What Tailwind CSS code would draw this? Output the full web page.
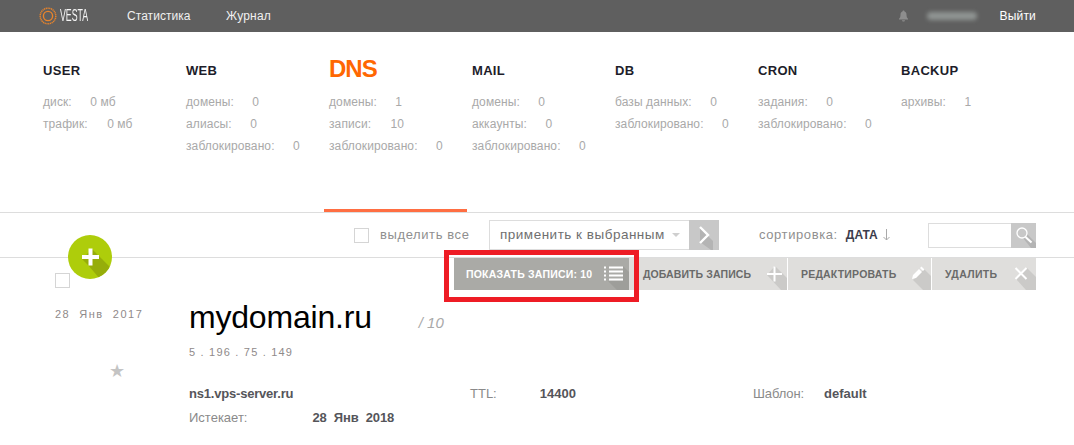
<!DOCTYPE html>
<html lang="ru">
<head>
    <meta charset="UTF-8">
    <title>Vesta DNS</title>
    <script src="https://cdn.jsdelivr.net/npm/@tailwindcss/browser@4"></script>
</head>
<body class="bg-white font-['Liberation_Sans',Arial,sans-serif] relative h-[445px] overflow-hidden">

    <!-- top bar -->
    <div class="h-8 bg-[#5f5f5f] flex items-center pl-[39px] pr-[38px] text-[12px] text-[#f0f0f0]">
        <svg width="18" height="18" viewBox="0 0 18 18" fill="none" class="mr-[3px]">
            <circle cx="9" cy="9" r="7.8" stroke="#e8842c" stroke-width="1.5" stroke-dasharray="1.2 0.6"/>
            <circle cx="9" cy="9" r="4.6" stroke="#e8842c" stroke-width="1.4"/>
        </svg>
        <span class="text-[16px] scale-x-[0.55] origin-left w-[67px] text-[#f4f4f4]">VESTA</span>
        <span class="w-[99px] tracking-[0.05px]">Статистика</span>
        <span class="tracking-[0.2px]">Журнал</span>
        <svg width="11" height="12" viewBox="0 0 11 12" class="ml-auto mr-[18px]" fill="#8d8d8d">
            <path d="M5.5 0.5c.6 0 1 .4 1 1 1.5.4 2 1.7 2 3.2 0 2 .5 3 1.5 4v.8H1v-.8c1-1 1.5-2 1.500-4 0-1.500.5-2.800 2-3.200 0-.6.4-1 1-1zM4 10.300h3c0 .8-.6 1.300-1.500 1.300S4 11.100 4 10.300z"/>
        </svg>
        <span class="w-[50px] h-[8px] mr-[22px] rounded-sm bg-[#8f9492] blur-[2px]"></span>
        <span class="tracking-[0.2px] text-white">Выйти</span>
    </div>

    <!-- stats menu -->
    <div class="h-[180px] grid grid-cols-[repeat(7,143px)] pl-[43px] text-[12px] tracking-[0.1px] text-[#a9a9a9]">
        <div class="pt-[31px]">
            <div class="h-[15px] text-[13px] leading-[15px] font-bold tracking-[0.3px] text-[#1d1d2a] mb-[13px]">USER</div>
            <div class="leading-[22px]"><div>диск: <span class="ml-[15px]">0 мб</span></div><div>трафик: <span class="ml-[16px]">0 мб</span></div></div>
        </div>
        <div class="pt-[31px]">
            <div class="h-[15px] text-[13px] leading-[15px] font-bold tracking-[0.3px] text-[#1d1d2a] mb-[13px]">WEB</div>
            <div class="leading-[22px]"><div>домены: <span class="ml-[15px]">0</span></div><div>алиасы: <span class="ml-[15px]">0</span></div><div>заблокировано: <span class="ml-[15px]">0</span></div></div>
        </div>
        <div class="pt-[26px]">
            <div class="h-[22px] text-[24px] leading-[22px] font-bold tracking-[-1px] text-[#ff6701] mb-[11px]">DNS</div>
            <div class="leading-[22px]"><div>домены: <span class="ml-[15px]">1</span></div><div>записи: <span class="ml-[16px]">10</span></div><div>заблокировано: <span class="ml-[15px]">0</span></div></div>
        </div>
        <div class="pt-[31px]">
            <div class="h-[15px] text-[13px] leading-[15px] font-bold tracking-[0.3px] text-[#1d1d2a] mb-[13px]">MAIL</div>
            <div class="leading-[22px]"><div>домены: <span class="ml-[15px]">0</span></div><div>аккаунты: <span class="ml-[15px]">0</span></div><div>заблокировано: <span class="ml-[15px]">0</span></div></div>
        </div>
        <div class="pt-[31px]">
            <div class="h-[15px] text-[13px] leading-[15px] font-bold tracking-[0.3px] text-[#1d1d2a] mb-[13px]">DB</div>
            <div class="leading-[22px]"><div>базы данных: <span class="ml-[15px]">0</span></div><div>заблокировано: <span class="ml-[15px]">0</span></div></div>
        </div>
        <div class="pt-[31px]">
            <div class="h-[15px] text-[13px] leading-[15px] font-bold tracking-[0.3px] text-[#1d1d2a] mb-[13px]">CRON</div>
            <div class="leading-[22px]"><div>задания: <span class="ml-[15px]">0</span></div><div>заблокировано: <span class="ml-[15px]">0</span></div></div>
        </div>
        <div class="pt-[31px]">
            <div class="h-[15px] text-[13px] leading-[15px] font-bold tracking-[0.3px] text-[#1d1d2a] mb-[13px]">BACKUP</div>
            <div class="leading-[22px]"><div>архивы: <span class="ml-[15px]">1</span></div></div>
        </div>
    </div>

    <!-- active tab underline + toolbar -->
    <div class="h-[46px] border-y border-[#dddddd] relative flex items-center pr-[38px] text-[13px] tracking-[0.6px] text-[#8f8f8f]">
        <div class="absolute left-[324px] top-[-4px] w-[143px] h-[3px] bg-[#ff6e42]"></div>
        <span class="ml-[354px] w-[15px] h-[15px] border border-[#d5d5d5]"></span>
        <span class="ml-[11px] w-[109px]">выделить все</span>
        <div class="w-[200px] h-[30px] border border-[#dddddd] border-r-0 flex items-center pl-[10px] text-[13.500px] tracking-[0.5px] text-[#6f6f6f]">
            применить к выбранным
            <span class="ml-[7px] w-0 h-0 border-x-[4px] border-x-transparent border-t-[4px] border-t-[#cfcfcf]"></span>
        </div>
        <svg width="30" height="30" viewBox="0 0 30 30" class="shrink-0 mr-[40px]">
            <rect width="30" height="30" fill="#c8c8c8"/>
            <path d="M11 8l13 13v9H22L11 22z" fill="#b4b4b4"/>
            <path d="M11 7l8 8-8 8" fill="none" stroke="#fff" stroke-width="2.400"/>
        </svg>
        <span>сортировка:</span>
        <span class="ml-[8px] text-[12px] font-bold tracking-normal text-[#3c3c4c]">ДАТА</span>
        <svg width="7" height="12" viewBox="0 0 7 12" class="ml-[5px]" fill="none" stroke="#aaaaaa">
            <path d="M3.500 0v11M0.500 8l3 3 3-3"/>
        </svg>
        <div class="ml-auto w-[83px] h-[25px] border border-[#dddddd] border-r-0"></div>
        <svg width="25" height="25" viewBox="0 0 25 25" class="shrink-0">
            <rect width="25" height="25" fill="#c8c8c8"/>
            <path d="M12 15l4-4 9 9v5h-5z" fill="#b4b4b4"/>
            <circle cx="11" cy="10" r="5" fill="none" stroke="#fff" stroke-width="1.300"/>
            <path d="M14.500 14l6 5.500" stroke="#fff" stroke-width="2"/>
        </svg>
    </div>

    <!-- round add button -->
    <div class="absolute left-[68px] top-[235px] w-11 h-11 rounded-full bg-[#aecd0b] overflow-hidden">
        <svg width="44" height="44" viewBox="0 0 44 44">
            <path d="M20 30l-6-6 10-10 10 10 10 10v10H32z" fill="#96ad0a"/>
            <path d="M22.500 13.500v17M14 22h17" stroke="#fff" stroke-width="4"/>
        </svg>
    </div>

    <!-- record -->
    <div class="relative h-[187px] flex">
        <div class="w-[189px] pl-[55px] shrink-0">
            <div class="w-[15px] h-[15px] border border-[#d5d5d5] mt-[15px]"></div>
            <div class="mt-[20px] text-[11px] leading-[13px] tracking-[1.500px] text-[#8f8a8a] whitespace-pre">28  Янв  2017</div>
            <div class="mt-[40px] ml-[54px] text-[18px] leading-[20px] text-[#c4c4c4]">★</div>
        </div>
        <div class="flex-1 pr-[38px]">
            <div class="flex justify-end h-8">
                <div class="w-[175px] bg-[#aaaaa6] text-white flex items-center pl-[12px] pt-[1px] relative overflow-hidden">
                    <span class="text-[10.500px] font-bold tracking-[0.2px]">ПОКАЗАТЬ ЗАПИСИ: 10</span>
                    <svg width="25" height="32" viewBox="0 0 25 32" class="absolute right-0 top-0">
                        <path d="M19 8L25 14V32H13L4 23H19z" fill="#9e9e9a"/>
                        <path d="M0 9.500h2M5 9.500h14M0 13.500h2M5 13.500h14M0 17.500h2M5 17.500h14M0 21.500h2M5 21.500h14" stroke="#fff" stroke-width="2"/>
                    </svg>
                </div>
                <div class="w-[159px] bg-[#dfdedc] border-r border-white text-[#6a6a6a] flex items-center pl-[14px] pt-[1px] relative overflow-hidden">
                    <span class="text-[10.500px] font-bold tracking-[0.1px]">ДОБАВИТЬ ЗАПИСЬ</span>
                    <svg width="26" height="32" viewBox="0 0 26 32" class="absolute right-0 top-0">
                        <path d="M6 17l8-9 12 12v12H20z" fill="#cbcac8"/>
                        <path d="M13.500 8.500v15M6 16h15" stroke="#fff" stroke-width="2"/>
                    </svg>
                </div>
                <div class="w-[144px] bg-[#dfdedc] border-r border-white text-[#6a6a6a] flex items-center pl-[13px] pt-[1px] relative overflow-hidden">
                    <span class="text-[10.500px] font-bold tracking-[0.2px]">РЕДАКТИРОВАТЬ</span>
                    <svg width="26" height="32" viewBox="0 0 26 32" class="absolute right-0 top-0">
                        <path d="M8 22L19 11l7 7v14H18z" fill="#cbcac8"/>
                        <path d="M7 21l1-4 6-6 3 3-6 6zM15 10l1.500-1.500 3 3L18 13z" fill="#fff"/>
                    </svg>
                </div>
                <div class="w-[104px] bg-[#dfdedc] text-[#6a6a6a] flex items-center pl-[13px] pt-[1px] relative overflow-hidden">
                    <span class="text-[10.500px] font-bold tracking-[0.35px]">УДАЛИТЬ</span>
                    <svg width="28" height="32" viewBox="0 0 28 32" class="absolute right-0 top-0">
                        <path d="M8 21l11-11 9 9v13H18z" fill="#cbcac8"/>
                        <path d="M7.500 10l11 11M18.500 10l-11 11" stroke="#fff" stroke-width="2"/>
                    </svg>
                </div>
            </div>
            <div class="flex items-baseline mt-[7px] h-[40px]">
                <span class="text-[32px] leading-[40px] tracking-[-0.2px] text-black">mydomain.ru</span>
                <span class="ml-[47px] text-[15px] italic text-[#a9a9a9]">/ 10</span>
            </div>
            <div class="mt-[9px] text-[11px] leading-[13px] tracking-[1.200px] text-[#8f8a8a]">5 . 196 . 75 . 149</div>
            <div class="mt-[27px] grid grid-cols-[281px_283px_1fr] text-[13px] leading-[15px] text-[#8a8a8a]">
                <span class="font-bold tracking-[-0.2px] text-[#55555a]">ns1.vps-server.ru</span>
                <span>TTL:<b class="ml-[43px] text-[#55555a]">14400</b></span>
                <span class="tracking-[-0.1px]">Шаблон:<b class="ml-[20px] tracking-normal text-[#55555a]">default</b></span>
            </div>
            <div class="mt-[9px] text-[13px] leading-[15px] text-[#8a8a8a]">
                Истекает:<b class="ml-[65px] tracking-[-0.1px] text-[#55555a] whitespace-pre">28  Янв  2018</b>
            </div>
        </div>
    </div>

    <!-- red highlight drawn on the screenshot -->
    <div class="absolute left-[444px] top-[250px] w-[195px] h-[52px] border-[5px] border-[#ee1c25]"></div>
</body>
</html>
